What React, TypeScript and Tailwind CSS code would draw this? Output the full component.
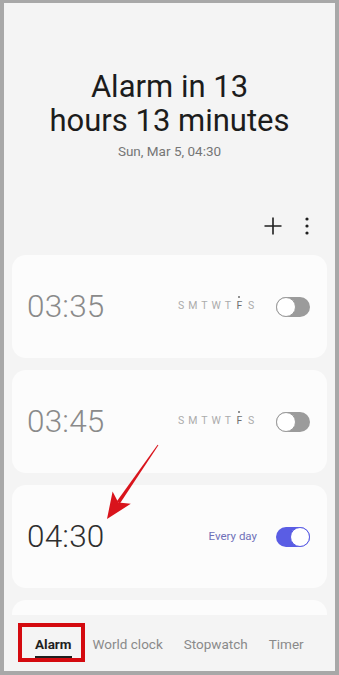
import React from "react";

const days = ["S", "M", "T", "W", "T", "F", "S"];

function Toggle({ on }: { on: boolean }) {
  return (
    <div
      className={`w-[34px] h-[20px] rounded-full flex items-center ${
        on ? "bg-[#5a5de4] justify-end" : "bg-[#9b9b9b] justify-start"
      }`}
    >
      <div
        className={`w-[20px] h-[20px] rounded-full bg-white border-[1.5px] ${
          on ? "border-[#5a5de4]" : "border-[#9b9b9b]"
        }`}
      />
    </div>
  );
}

function DayRow() {
  return (
    <div className="flex items-center">
      {days.map((d, i) => (
        <span
          key={i}
          className={`relative w-[11.7px] text-center text-[10.5px] leading-none ${
            i === 5 ? "text-[#6f6f6f]" : "text-[#ababab]"
          }`}
        >
          {i === 5 && (
            <span className="absolute left-1/2 -top-[5px] w-[2px] h-[2px] -ml-[1px] rounded-full bg-[#6f6f6f]" />
          )}
          {d}
        </span>
      ))}
    </div>
  );
}

function AlarmCard({ time, active }: { time: string; active: boolean }) {
  return (
    <div className="h-[103px] shrink-0 rounded-[14px] bg-[#fcfcfc] flex items-center pl-[15px] pr-[17px]">
      <span
        className={`text-[31.5px] font-light tracking-[0.2px] ${
          active ? "text-[#2e2e2e]" : "text-[#8a8a8a]"
        }`}
      >
        {time}
      </span>
      <div className="ml-auto flex items-center gap-[19px]">
        {active ? (
          <span className="text-[11.5px] text-[#6e70b9]">Every day</span>
        ) : (
          <DayRow />
        )}
        <Toggle on={active} />
      </div>
    </div>
  );
}

export default function App() {
  return (
    <div
      className="relative w-[339px] h-[675px] bg-[#a8a8a8] pt-[3px] pl-[4px] pr-[4px] pb-[4px] overflow-hidden"
      style={{ fontFamily: "Roboto, 'Noto Sans', sans-serif" }}
    >
      <div className="h-[668px] bg-[#f4f4f4] flex flex-col">
        {/* header */}
        <div className="pt-[67px] flex flex-col items-center">
          <div className="text-[31px] leading-[34px] text-[#1c1c1c] text-center">
            Alarm in 13
            <br />
            hours 13 minutes
          </div>
          <div className="mt-[5px] text-[13.5px] leading-[16px] text-[#767676]">
            Sun, Mar 5, 04:30
          </div>
        </div>

        {/* actions */}
        <div className="mt-[55px] h-[24px] flex items-center justify-end pr-[25px] gap-[22px]">
          <svg width="18" height="18" viewBox="0 0 18 18">
            <path d="M9 0.5V17.5M0.5 9H17.5" stroke="#1f1f1f" strokeWidth="1.6" />
          </svg>
          <svg width="6" height="18" viewBox="0 0 6 18">
            <circle cx="3" cy="2" r="1.6" fill="#1f1f1f" />
            <circle cx="3" cy="9" r="1.6" fill="#1f1f1f" />
            <circle cx="3" cy="16" r="1.6" fill="#1f1f1f" />
          </svg>
        </div>

        {/* alarm list */}
        <div className="mt-[17px] flex-1 overflow-hidden px-[8px] flex flex-col gap-[12px]">
          <AlarmCard time="03:35" active={false} />
          <AlarmCard time="03:45" active={false} />
          <AlarmCard time="04:30" active={true} />
          <div className="h-[103px] shrink-0 rounded-[14px] bg-[#fcfcfc]" />
        </div>

        {/* tabs */}
        <div className="h-[56px] shrink-0 flex items-center pl-[31px] gap-[21px] text-[13.5px] text-[#8a8a8a] pt-[3px]">
          <span className="relative font-bold text-[#1f1f1f]">
            Alarm
            <span className="absolute left-0 right-0 -bottom-[3px] h-[2px] bg-[#1f1f1f]" />
          </span>
          <span>World clock</span>
          <span>Stopwatch</span>
          <span>Timer</span>
        </div>
      </div>

      {/* annotation: red box */}
      <div className="absolute left-[18px] top-[623px] w-[67px] h-[39px] border-[4px] border-[#d40a0f] pointer-events-none" />

      {/* annotation: red arrow */}
      <svg
        className="absolute left-0 top-0 pointer-events-none"
        width="339"
        height="675"
        viewBox="0 0 339 675"
      >
        <polygon
          points="158.4,445.3 157.6,444.7 116.7,501.4 119.9,503.6"
          fill="#d9141c"
        />
        <polygon points="107,519 112.6,491.4 118.3,502.5 130.8,503.8" fill="#d9141c" />
      </svg>
    </div>
  );
}
